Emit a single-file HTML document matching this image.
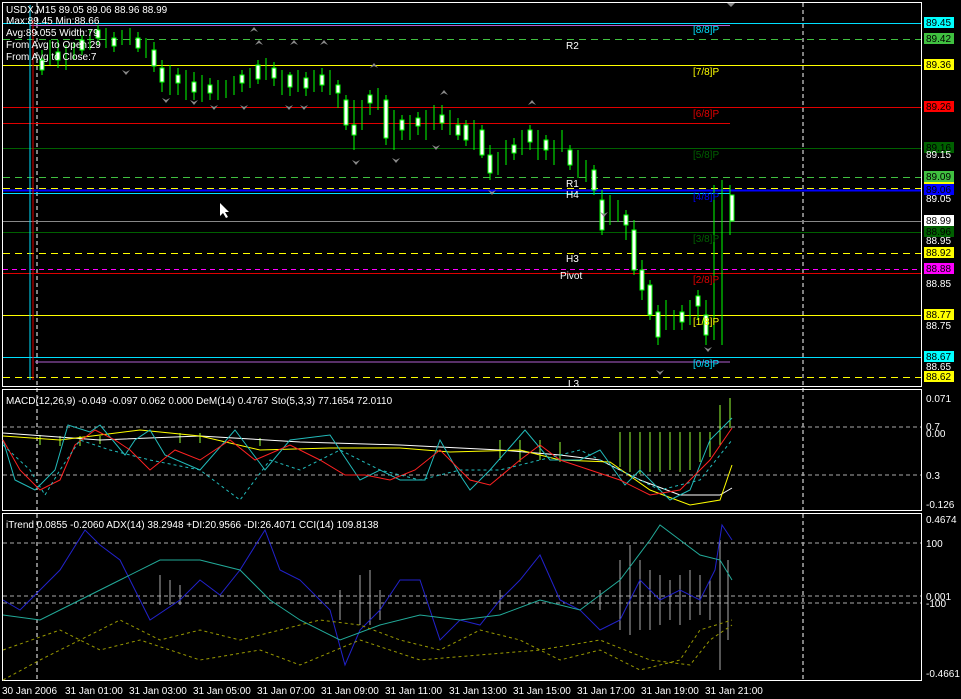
<!DOCTYPE html>
<html><head><meta charset="utf-8"><style>
body{margin:0;background:#000;width:961px;height:699px;overflow:hidden;font-family:"Liberation Sans",sans-serif}
svg{display:block}
text{font-family:"Liberation Sans",sans-serif;font-size:10px}
</style></head><body>
<svg width="961" height="699" viewBox="0 0 961 699">
<rect width="961" height="699" fill="#000"/>
<!-- panel borders -->
<rect x="2.5" y="2.5" width="919" height="384" fill="none" stroke="#fff"/>
<rect x="2.5" y="389.5" width="919" height="121" fill="none" stroke="#fff"/>
<rect x="2.5" y="513.5" width="919" height="167" fill="none" stroke="#fff"/>
<!-- vertical dashed -->
<line x1="37" y1="3" x2="37" y2="680" stroke="#fff" stroke-dasharray="4,3"/>
<line x1="803" y1="3" x2="803" y2="680" stroke="#fff" stroke-dasharray="4,3"/>
<!-- horizontal levels -->
<g stroke-width="1">
<line x1="3" y1="23.5" x2="921" y2="23.5" stroke="#00e0ff"/>
<line x1="30" y1="25.5" x2="730" y2="25.5" stroke="#b060d0"/>
<line x1="3" y1="39.5" x2="921" y2="39.5" stroke="#40c040" stroke-dasharray="7,5"/>
<line x1="3" y1="65.5" x2="921" y2="65.5" stroke="#ffff00"/>
<line x1="3" y1="107.5" x2="921" y2="107.5" stroke="#e00000"/>
<line x1="3" y1="123.5" x2="730" y2="123.5" stroke="#e00000"/>
<line x1="3" y1="148.5" x2="921" y2="148.5" stroke="#006000"/>
<line x1="3" y1="177.5" x2="921" y2="177.5" stroke="#40c040" stroke-dasharray="7,5"/>
<line x1="3" y1="188.5" x2="921" y2="188.5" stroke="#ffff00" stroke-dasharray="7,5"/>
<line x1="3" y1="190.5" x2="921" y2="190.5" stroke="#0000ff" stroke-width="2"/>
<line x1="3" y1="193.5" x2="730" y2="193.5" stroke="#00e0ff"/>
<line x1="3" y1="221.5" x2="921" y2="221.5" stroke="#888"/>
<line x1="3" y1="232.5" x2="921" y2="232.5" stroke="#006000"/>
<line x1="3" y1="253.5" x2="921" y2="253.5" stroke="#ffff00" stroke-dasharray="7,5"/>
<line x1="3" y1="269.5" x2="921" y2="269.5" stroke="#ff00ff" stroke-dasharray="5,4"/>
<line x1="3" y1="273.5" x2="921" y2="273.5" stroke="#e00000"/>
<line x1="3" y1="315.5" x2="921" y2="315.5" stroke="#ffff00"/>
<line x1="3" y1="357.5" x2="921" y2="357.5" stroke="#00e0ff"/>
<line x1="35" y1="362" x2="730" y2="362" stroke="#b060d0"/>
<line x1="3" y1="377.5" x2="921" y2="377.5" stroke="#ffff00" stroke-dasharray="7,5"/>
<line x1="30" y1="5" x2="30" y2="380" stroke="#00e0ff"/>
<line x1="33" y1="20" x2="33" y2="380" stroke="#e00000"/>
</g>
<!-- candles -->
<g stroke="#00ff00" fill="#fff">
<path d="M42 50V75M50 40V65M58 40V68M66 45V70M74 42V60M82 35V55M90 30V50M98 25V45M106 28V48M114 32V52M122 30V45M130 28V45M138 32V52M146 38V58M154 42V72M162 60V92M170 65V95M178 68V95M186 70V100M194 72V100M202 75V102M210 78V100M218 80V100M226 80V98M234 76V95M242 70V92M250 68V88M258 60V84M266 58V80M274 62V86M282 70V95M290 72V96M298 70V92M306 72V96M314 70V92M322 68V92M330 70V95M338 80V108M346 95V130M354 100V150M362 100V130M370 90V115M378 88V110M386 95V145M394 110V150M402 115V140M410 115V140M418 112V135M426 110V140M434 105V130M442 105V130M450 110V135M458 118V140M466 120V146M474 120V150M482 125V158M490 145V180M498 152V175M506 140V165M514 138V160M522 130V155M530 125V150M538 130V160M546 135V160M554 140V165M562 130V152M570 145V170M578 150V178M586 160V182M594 165V195M602 190V235M610 195V225M618 200V222M626 210V240M634 220V275M642 260V300M650 280V320M658 305V345M666 300V330M674 310V330M682 305V330M690 300V325M698 290V320M706 300V345M714 185V340M722 180V345M730 185V235"/>
<path d="M40 60h4v10h-4zM56 52h4v8h-4zM80 40h4v10h-4zM96 30h4v8h-4zM112 38h4v8h-4zM136 38h4v10h-4zM152 50h4v16h-4zM160 68h4v14h-4zM176 75h4v8h-4zM192 82h4v10h-4zM208 85h4v8h-4zM240 75h4v8h-4zM256 65h4v14h-4zM272 68h4v10h-4zM288 75h4v12h-4zM304 78h4v10h-4zM320 75h4v10h-4zM336 85h4v8h-4zM344 100h4v25h-4zM352 125h4v10h-4zM368 95h4v8h-4zM384 100h4v38h-4zM400 120h4v10h-4zM416 118h4v8h-4zM440 115h4v8h-4zM456 125h4v10h-4zM464 125h4v15h-4zM480 130h4v25h-4zM488 155h4v18h-4zM512 145h4v8h-4zM528 130h4v12h-4zM544 140h4v10h-4zM568 150h4v15h-4zM592 170h4v20h-4zM600 200h4v30h-4zM624 215h4v10h-4zM632 230h4v40h-4zM640 270h4v20h-4zM648 285h4v30h-4zM656 312h4v25h-4zM680 312h4v10h-4zM696 296h4v10h-4zM704 315h4v20h-4zM730 195h4v26h-4z"/>
</g>
<g fill="#888">
<path d="M122 70l4 5 4-5-4 2zM162 98l4 5 4-5-4 2zM190 100l4 5 4-5-4 2zM250 32l4-5 4 5-4-2zM290 45l4-5 4 5-4-2zM320 45l4-5 4 5-4-2zM370 68l4-5 4 5-4-2zM352 160l4 5 4-5-4 2zM392 158l4 5 4-5-4 2zM432 145l4 5 4-5-4 2zM440 95l4-5 4 5-4-2zM488 190l4 5 4-5-4 2zM528 105l4-5 4 5-4-2zM600 212l4 5 4-5-4 2zM656 370l4 5 4-5-4 2zM704 347l4 5 4-5-4 2zM210 105l4 5 4-5-4 2zM240 105l4 5 4-5-4 2zM285 105l4 5 4-5-4 2zM300 105l4 5 4-5-4 2zM255 45l4-5 4 5-4-2zM727 3h8l-4 4z"/>
</g>
<!-- main texts -->
<g fill="#fff">
<text x="6" y="13">USDX,M15  89.05 89.06 88.96 88.99</text>
<text x="6" y="24">Max:89.45 Min:88.66</text>
<text x="6" y="36">Avg:89.055 Width:79</text>
<text x="6" y="48">From Avg to Open:29</text>
<text x="6" y="60">From Avg to Close:7</text>
<text x="566" y="49">R2</text>
<text x="566" y="187">R1</text>
<text x="566" y="198">H4</text>
<text x="566" y="262">H3</text>
<text x="560" y="279">Pivot</text>
<text x="568" y="387">L3</text>
</g>
<g font-size="10">
<text x="693" y="33" fill="#00e0ff">[8/8]P</text>
<text x="693" y="75" fill="#ffff00">[7/8]P</text>
<text x="693" y="117" fill="#e00000">[6/8]P</text>
<text x="693" y="158" fill="#006000">[5/8]P</text>
<text x="693" y="200" fill="#0000ff">[4/8]P</text>
<text x="693" y="242" fill="#006000">[3/8]P</text>
<text x="693" y="283" fill="#e00000">[2/8]P</text>
<text x="693" y="325" fill="#ffff00">[1/8]P</text>
<text x="693" y="367" fill="#00e0ff">[0/8]P</text>
</g>
<path d="M220 203v13l3-3 3 5 2-1-3-5h4z" fill="#fff"/>
<!-- price labels -->
<g font-size="10">
<rect x="924" y="17" width="30" height="11" fill="#00ffff"/><text x="926" y="26" fill="#000">89.45</text>
<rect x="924" y="33" width="30" height="11" fill="#40c040"/><text x="926" y="42" fill="#000">89.42</text>
<rect x="924" y="59" width="30" height="11" fill="#ffff00"/><text x="926" y="68" fill="#000">89.36</text>
<rect x="924" y="101" width="30" height="11" fill="#ff0000"/><text x="926" y="110" fill="#000">89.26</text>
<rect x="924" y="142" width="30" height="11" fill="#006000"/><text x="926" y="151" fill="#000">89.16</text>
<text x="926" y="158" fill="#fff">89.15</text>
<rect x="924" y="171" width="30" height="11" fill="#40c040"/><text x="926" y="180" fill="#000">89.09</text>
<rect x="924" y="182" width="30" height="2" fill="#ffff00"/>
<rect x="924" y="184" width="30" height="11" fill="#0000ff"/><text x="926" y="193" fill="#000">89.06</text>
<text x="926" y="202" fill="#fff">89.05</text>
<rect x="924" y="215" width="30" height="11" fill="#fff"/><text x="926" y="224" fill="#000">88.99</text>
<rect x="924" y="226" width="30" height="11" fill="#006000"/><text x="926" y="235" fill="#000">88.96</text>
<text x="926" y="244" fill="#fff">88.95</text>
<rect x="924" y="247" width="30" height="11" fill="#ffff00"/><text x="926" y="256" fill="#000">88.92</text>
<rect x="924" y="263" width="30" height="11" fill="#ff00ff"/><text x="926" y="272" fill="#000">88.88</text>
<text x="926" y="287" fill="#fff">88.85</text>
<rect x="924" y="309" width="30" height="11" fill="#ffff00"/><text x="926" y="318" fill="#000">88.77</text>
<text x="926" y="329" fill="#fff">88.75</text>
<rect x="924" y="351" width="30" height="11" fill="#00ffff"/><text x="926" y="360" fill="#000">88.67</text>
<text x="926" y="370" fill="#fff">88.65</text>
<rect x="924" y="371" width="30" height="11" fill="#ffff00"/><text x="926" y="380" fill="#000">88.62</text>
</g>
<!-- MACD panel -->
<text x="6" y="404" fill="#fff">MACD(12,26,9) -0.049 -0.097 0.062 0.000  DeM(14) 0.4767  Sto(5,3,3) 77.1654 72.0110</text>
<line x1="3" y1="427" x2="921" y2="427" stroke="#aaa" stroke-dasharray="4,3"/>
<line x1="3" y1="475" x2="921" y2="475" stroke="#aaa" stroke-dasharray="4,3"/>
<g stroke="#9f3" stroke-width="1">
<path d="M40 435v10M60 436v10M80 436v10M100 436v8M180 433v10M200 433v10M260 438v8M500 440v20M520 440v22M540 440v20M560 442v20M620 432v35M630 432v40M640 432v42M650 432v40M660 432v40M670 432v38M680 432v40M690 432v38M700 432v30M710 432v25M720 405v40M730 398v30"/>
</g>
<polyline fill="none" stroke="#fff" points="3,433 100,440 200,436 300,442 400,445 500,450 560,455 600,460 640,480 680,495 720,495 732,488"/>
<polyline fill="none" stroke="#ff0" points="3,436 60,440 140,430 200,436 260,450 330,448 400,448 450,452 520,450 560,460 610,462 650,490 690,505 720,500 732,465"/>
<polyline fill="none" stroke="#2bb" points="3,440 15,480 35,490 55,470 68,425 90,432 100,425 125,455 135,440 150,430 165,455 200,470 235,430 265,470 290,440 330,435 360,480 380,470 400,480 425,480 440,440 460,475 470,490 490,470 525,430 550,460 560,460 580,460 600,450 625,485 640,470 670,500 690,490 710,440 732,418"/>
<polyline fill="none" stroke="#f22" points="3,440 20,470 40,490 60,480 75,445 95,430 115,440 130,450 150,470 175,450 200,460 230,440 255,460 290,445 320,460 345,475 365,475 390,480 415,470 440,450 470,480 490,485 520,460 540,445 560,460 590,470 620,480 650,495 680,490 710,460 732,428"/>
<polyline fill="none" stroke="#2bb" stroke-dasharray="3,3" points="3,445 30,470 45,495 60,470 80,440 110,450 150,460 200,470 240,500 270,460 300,470 340,450 380,470 420,480 460,470 500,470 540,460 580,450 620,470 660,490 700,480 732,440"/>
<g fill="#fff" font-size="10">
<text x="926" y="402">0.071</text><text x="926" y="430">0.7</text><text x="926" y="437">0.00</text><text x="926" y="479">0.3</text><text x="926" y="508">-0.126</text>
</g>
<!-- iTrend panel -->
<text x="6" y="528" fill="#fff">iTrend 0.0855 -0.2060  ADX(14) 38.2948  +DI:20.9566 -DI:26.4071  CCI(14) 109.8138</text>
<line x1="3" y1="543" x2="921" y2="543" stroke="#aaa" stroke-dasharray="4,3"/>
<line x1="3" y1="596" x2="921" y2="596" stroke="#aaa" stroke-dasharray="4,3"/>
<line x1="3" y1="603" x2="921" y2="603" stroke="#aaa" stroke-dasharray="4,3"/>
<g stroke="#aaa">
<path d="M160 575v30M170 580v25M180 585v20M340 590v30M360 575v50M370 570v55M380 590v30M500 590v20M600 590v20M620 560v70M630 545v90M640 560v70M650 570v60M660 575v50M670 580v40M680 575v50M690 570v50M700 575v40M710 580v40M720 540v130M728 560v80"/>
</g>
<polyline fill="none" stroke="#22c" points="3,600 20,610 40,590 60,570 85,530 100,545 120,560 150,620 180,600 200,580 220,595 240,570 265,530 280,570 300,580 330,610 345,665 360,630 380,610 400,580 420,580 440,640 460,620 480,625 500,600 520,580 540,555 560,600 580,610 600,630 620,620 640,580 660,600 680,590 700,600 715,570 722,525 732,540"/>
<polyline fill="none" stroke="#2a9" points="3,615 40,620 80,600 120,580 160,560 200,560 240,570 270,600 300,620 340,640 380,625 420,615 460,620 500,615 540,600 580,610 620,580 650,540 660,525 680,540 700,555 720,560 732,580"/>
<polyline fill="none" stroke="#990" stroke-dasharray="3,3" points="3,680 40,660 80,640 120,620 160,640 200,630 240,640 280,630 320,620 360,625 400,640 440,650 480,630 520,640 560,660 600,650 640,670 680,660 700,630 732,620"/>
<polyline fill="none" stroke="#990" stroke-dasharray="3,3" points="3,650 60,630 100,650 140,640 200,660 260,650 300,665 360,640 420,660 480,655 540,650 600,640 650,660 690,665 710,640 732,625"/>
<g fill="#fff" font-size="10">
<text x="926" y="523">0.4674</text><text x="926" y="547">100</text><text x="926" y="600">0.001</text><text x="926" y="607">-100</text><text x="926" y="677">-0.4661</text>
</g>
<!-- time axis -->
<g fill="#fff" font-size="10">
<text x="2" y="694">30 Jan 2006</text>
<text x="65" y="694">31 Jan 01:00</text>
<text x="129" y="694">31 Jan 03:00</text>
<text x="193" y="694">31 Jan 05:00</text>
<text x="257" y="694">31 Jan 07:00</text>
<text x="321" y="694">31 Jan 09:00</text>
<text x="385" y="694">31 Jan 11:00</text>
<text x="449" y="694">31 Jan 13:00</text>
<text x="513" y="694">31 Jan 15:00</text>
<text x="577" y="694">31 Jan 17:00</text>
<text x="641" y="694">31 Jan 19:00</text>
<text x="705" y="694">31 Jan 21:00</text>
</g>
</svg>
</body></html>
